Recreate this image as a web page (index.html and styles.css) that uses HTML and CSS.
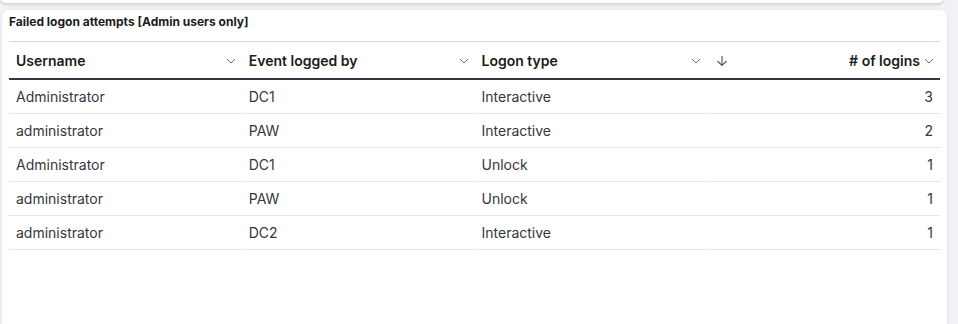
FILE: index.html
```html
<!DOCTYPE html>
<html>
<head>
<meta charset="utf-8">
<link rel="stylesheet" href="styles.css">
</head>
<body>
<div class="top-panel"></div>
<div class="panel">
  <div class="title">Failed logon attempts [Admin users only]</div>
  <div class="table">
    <div class="row head">
      <div class="cell"><span class="label">Username</span><svg class="chev" viewBox="0 0 16 16"><path d="M4 6l4 4 4-4"/></svg></div>
      <div class="cell"><span class="label">Event logged by</span><svg class="chev" viewBox="0 0 16 16"><path d="M4 6l4 4 4-4"/></svg></div>
      <div class="cell"><span class="label">Logon type</span><svg class="chev" viewBox="0 0 16 16"><path d="M4 6l4 4 4-4"/></svg></div>
      <div class="cell num"><svg class="arrow" viewBox="0 0 16 16"><path d="M8 3v9.5M3.5 8l4.5 4.5 4.5-4.5"/></svg><span class="label">#&nbsp;of logins</span><svg class="chev" viewBox="0 0 16 16"><path d="M4 6l4 4 4-4"/></svg></div>
    </div>
    <div class="row"><div class="cell">Administrator</div><div class="cell">DC1</div><div class="cell">Interactive</div><div class="cell num">3</div></div>
    <div class="row"><div class="cell">administrator</div><div class="cell">PAW</div><div class="cell">Interactive</div><div class="cell num">2</div></div>
    <div class="row"><div class="cell">Administrator</div><div class="cell">DC1</div><div class="cell">Unlock</div><div class="cell num">1</div></div>
    <div class="row"><div class="cell">administrator</div><div class="cell">PAW</div><div class="cell">Unlock</div><div class="cell num">1</div></div>
    <div class="row"><div class="cell">administrator</div><div class="cell">DC2</div><div class="cell">Interactive</div><div class="cell num">1</div></div>
  </div>
</div>
</body>
</html>
```

FILE: styles.css
```css
html, body {
  margin: 0;
  padding: 0;
  background: #f1f2f5;
  font-family: Inter, "Noto Sans", sans-serif;
  color: #343741;
  overflow: hidden;
}
.top-panel {
  height: 3px;
  width: 944px;
  margin-top: -6px;
  margin-bottom: 7px;
  padding-top: 6px;
  background: #fff;
  border-radius: 0 0 6px 6px;
  box-shadow: 0 1px 3px rgba(0,0,0,0.12), 0 2px 4px rgba(0,0,0,0.06);
}
.panel {
  margin-left: 2px;
  width: 945px;
  height: 330px;
  background: #fff;
  border-radius: 6px;
  box-shadow: 0 0 2px rgba(0,0,0,0.08), 0 1px 3px rgba(0,0,0,0.06);
  padding: 0 7px;
  box-sizing: border-box;
}
.title {
  font-size: 12px;
  font-weight: 700;
  color: #1a1c21;
  height: 32px;
  line-height: 14px;
  padding-top: 5px;
  box-sizing: border-box;
  border-bottom: 1px solid #d3dae6;
}
.table {
  width: 931px;
}
.row {
  display: grid;
  grid-template-columns: repeat(4, 1fr);
  height: 34px;
  box-sizing: border-box;
}
.row .cell {
  display: flex;
  align-items: center;
  padding: 0 7px;
  font-size: 14px;
  border-bottom: 1px solid #e3e6ec;
  margin-right: 1px;
  box-sizing: border-box;
  min-width: 0;
}
.row .cell:last-child { margin-right: 0; }
.row.head {
  height: 38px;
}
.row.head .cell {
  border-bottom: 2px solid #343741;
  margin-right: 0;
  font-weight: 600;
  color: #1a1c21;
  padding-top: 1px;
}
.row.head .cell .label { flex: 1; }
.row.head .cell.num .label { flex: 1; text-align: right; }
.cell.num { justify-content: flex-end; }
.chev {
  width: 16px;
  height: 16px;
  flex: none;
  fill: none;
  stroke: #69707d;
  stroke-width: 1;
  margin-left: 1px;
  margin-right: -4px;
}
.arrow {
  width: 16px;
  height: 16px;
  flex: none;
  fill: none;
  stroke: #535966;
  stroke-width: 1.1;
  margin-left: 0;
}
```
